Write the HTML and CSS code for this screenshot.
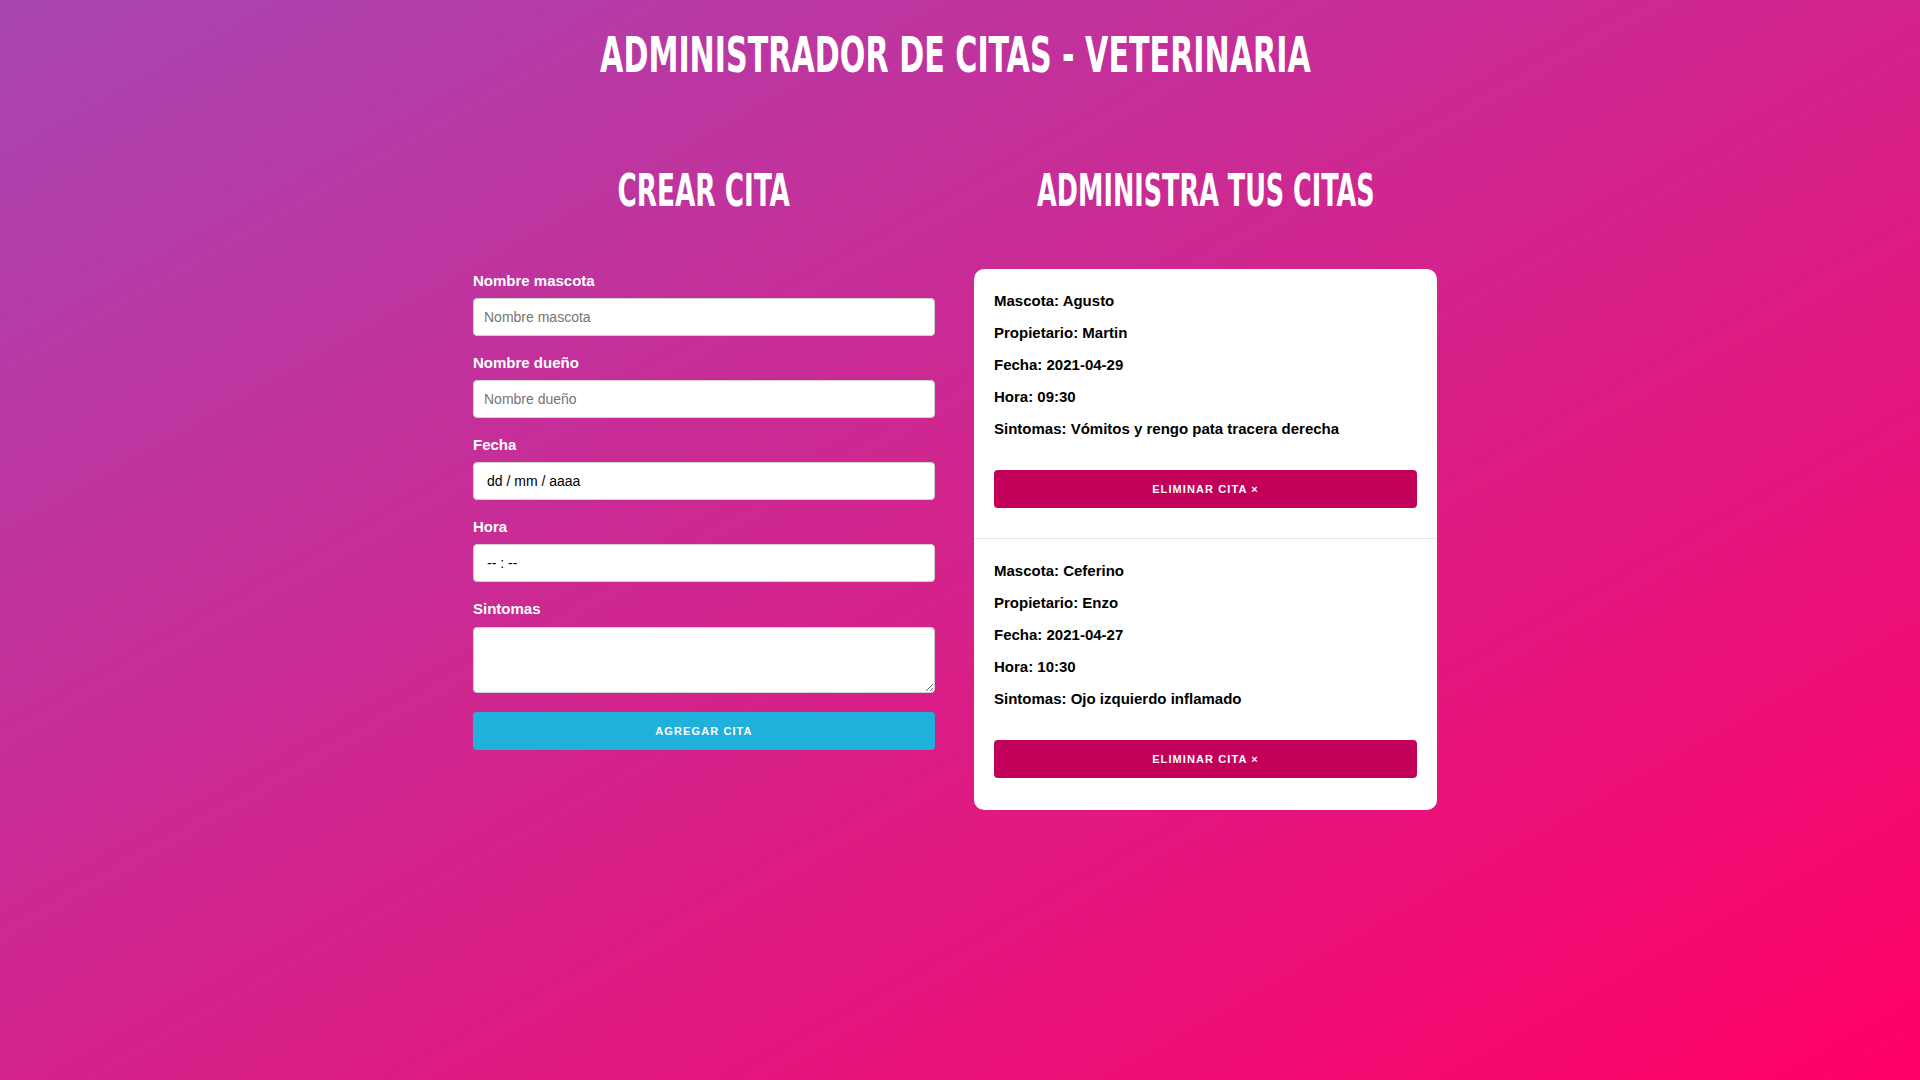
FILE: index.html
```html
<!DOCTYPE html>
<html lang="es">
<head>
<meta charset="utf-8">
<title>Administrador de Citas - Veterinaria</title>
<link rel="stylesheet" href="styles.css">
</head>
<body>
  <h1 class="title"><span class="display">Administrador de citas - veterinaria</span></h1>
  <div class="container">
    <section class="column">
      <h2 class="heading"><span class="display">Crear cita</span></h2>
      <form class="form">
        <label class="label">Nombre mascota</label>
        <input class="field" type="text" placeholder="Nombre mascota">
        <label class="label">Nombre dueño</label>
        <input class="field" type="text" placeholder="Nombre dueño">
        <label class="label">Fecha</label>
        <input class="field field--native" type="text" placeholder="dd / mm / aaaa">
        <label class="label">Hora</label>
        <input class="field field--native" type="text" placeholder="-- : --">
        <label class="label">Sintomas</label>
        <textarea class="field field--area"></textarea>
        <button class="btn btn--primary" type="button">Agregar cita</button>
      </form>
    </section>
    <section class="column">
      <h2 class="heading heading--wide"><span class="display">Administra tus citas</span></h2>
      <div class="card">
        <div class="cita">
          <p class="cita__line">Mascota: Agusto</p>
          <p class="cita__line">Propietario: Martin</p>
          <p class="cita__line">Fecha: 2021-04-29</p>
          <p class="cita__line">Hora: 09:30</p>
          <p class="cita__line">Sintomas: Vómitos y rengo pata tracera derecha</p>
          <button class="btn btn--danger" type="button">Eliminar cita &times;</button>
        </div>
        <div class="cita">
          <p class="cita__line">Mascota: Ceferino</p>
          <p class="cita__line">Propietario: Enzo</p>
          <p class="cita__line">Fecha: 2021-04-27</p>
          <p class="cita__line">Hora: 10:30</p>
          <p class="cita__line">Sintomas: Ojo izquierdo inflamado</p>
          <button class="btn btn--danger" type="button">Eliminar cita &times;</button>
        </div>
      </div>
    </section>
  </div>
</body>
</html>
```
FILE: styles.css
```css
* { box-sizing: border-box; }

html {
  height: 100%;
}

body {
  margin: 0;
  padding: 0 10px 0 0;
  min-height: 100%;
  font-family: "Liberation Sans", Arial, sans-serif;
  font-size: 15px;
  line-height: 24px;
  color: #222;
  background: linear-gradient(to bottom right, #a846b2 0%, #ff0066 100%) fixed;
}

.display {
  display: inline-block;
  flex: none;
  font-family: "Liberation Sans Narrow", "DejaVu Sans Condensed", "Liberation Sans", sans-serif;
  font-weight: 700;
  text-transform: uppercase;
  color: #fff;
  white-space: nowrap;
}

.title {
  display: flex;
  justify-content: center;
  margin: 25px 0 0;
  font-size: 50px;
  line-height: 60px;
  font-weight: 700;
}

.title .display {
  transform: scaleX(0.67);
}

.container {
  width: 964px;
  margin: 78px auto 0;
  display: grid;
  grid-template-columns: 462px 463px;
  column-gap: 39px;
  align-items: start;
}

.column {
  min-width: 0;
}

.heading {
  display: flex;
  justify-content: center;
  margin: 0 0 51px;
  font-size: 45px;
  line-height: 55px;
  font-weight: 700;
}

.heading .display {
  transform: scaleX(0.65);
}

.heading--wide .display {
  transform: scaleX(0.63);
}

.form {
  display: flex;
  flex-direction: column;
}

.label {
  display: block;
  color: #fff;
  font-weight: 700;
  font-size: 15px;
  line-height: 24px;
  margin-bottom: 5px;
}

.field {
  display: block;
  width: 100%;
  height: 38px;
  padding: 6px 10px;
  margin: 0 0 15px;
  border: 1px solid #d1d1d1;
  border-radius: 4px;
  background: #fff;
  font-family: "Liberation Sans", Arial, sans-serif;
  font-size: 14px;
  color: #222;
  outline: none;
}

.field::placeholder {
  color: #757575;
}

.field--native {
  padding-left: 13px;
}

.field--native::placeholder {
  color: #000;
}

.field--area {
  height: 66px;
  min-height: 66px;
  margin-top: 1px;
  margin-bottom: 19px;
  resize: vertical;
}

.btn {
  display: block;
  width: 100%;
  height: 38px;
  padding: 0 30px;
  border: none;
  border-radius: 4px;
  color: #fff;
  font-family: "Liberation Sans", Arial, sans-serif;
  font-size: 11px;
  font-weight: 700;
  letter-spacing: 1.1px;
  text-transform: uppercase;
  line-height: 38px;
  text-align: center;
  cursor: pointer;
}

.btn--primary {
  background: #1fb0dc;
}

.btn--danger {
  background: #c2005a;
  margin-top: 29px;
  margin-bottom: 10px;
}

.card {
  background: #fff;
  border-radius: 10px;
  overflow: hidden;
}

.cita {
  padding: 20px;
}

.cita + .cita {
  border-top: 1px solid #e6e6e6;
}

.cita:last-child {
  padding-bottom: 22px;
}

.cita__line {
  margin: 0 0 8px;
  font-weight: 700;
  font-size: 15px;
  line-height: 24px;
  color: #000;
}
```
